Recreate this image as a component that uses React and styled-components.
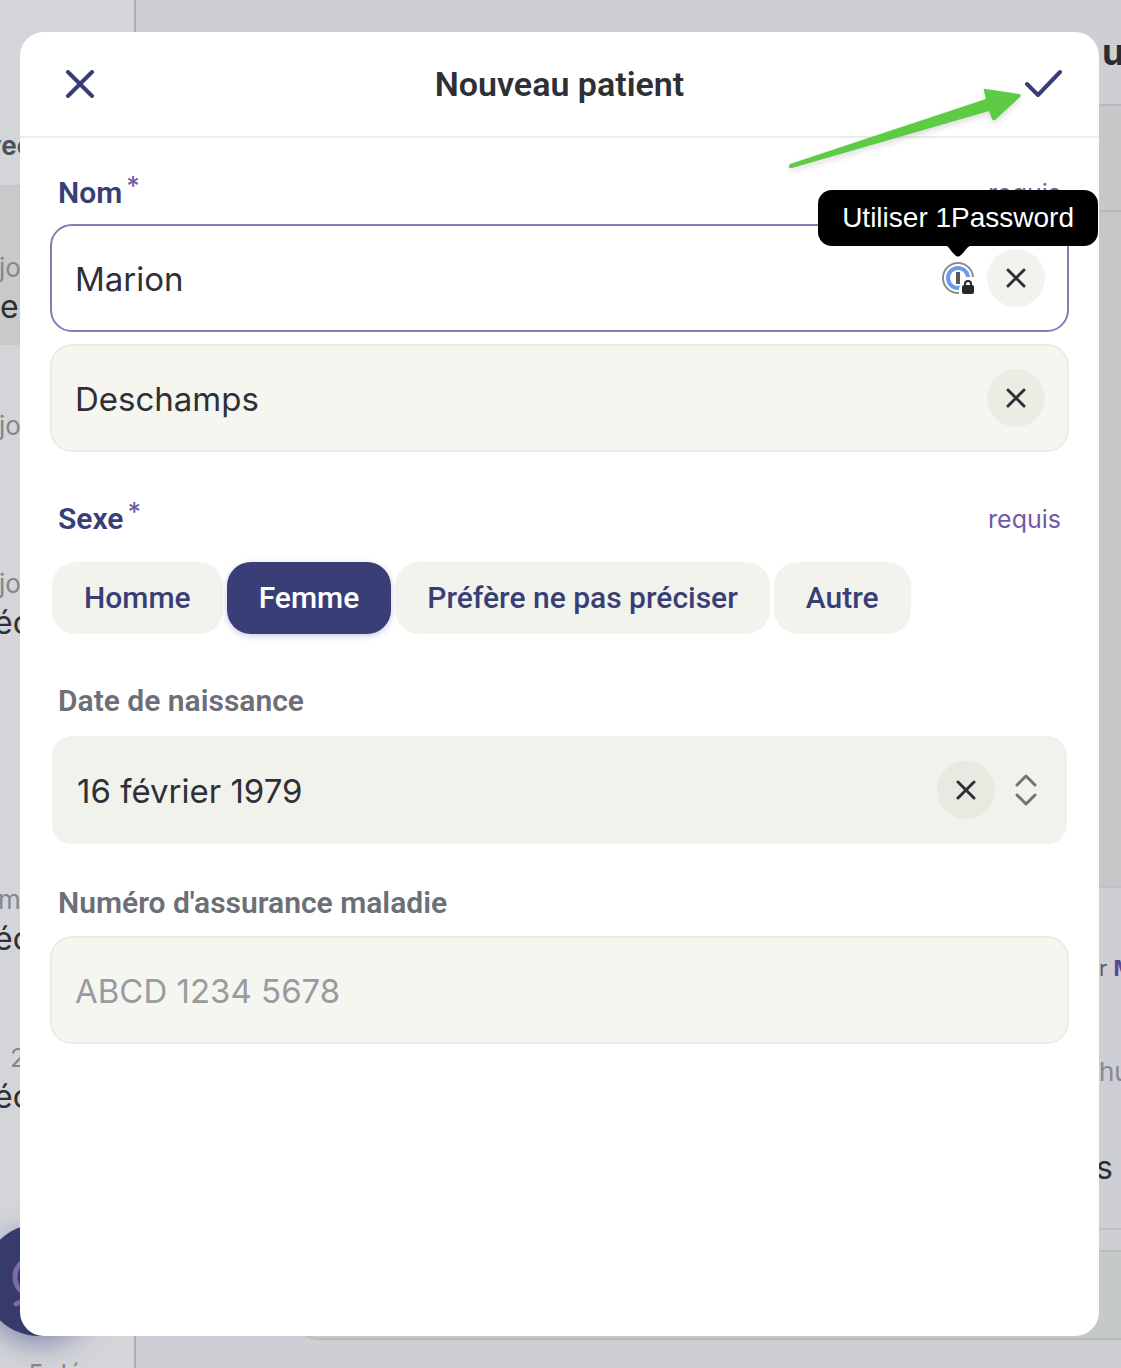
import React, { useState } from "react";
import styled, { createGlobalStyle, css } from "styled-components";

const colors = {
  navy: "#393f76",
  purple: "#7359a6",
  ink: "#2e3036",
  slate: "#6b6f78",
  field: "#f5f6f0",
  fieldDark: "#f1f2ec",
};

const GlobalStyle = createGlobalStyle`
  *, *::before, *::after { box-sizing: border-box; }
  body { margin: 0; font-family: Inter, "Noto Sans", sans-serif; color: ${colors.ink}; background: #cecfd5; }
  button, input { font: inherit; color: inherit; }
  button { border: 0; padding: 0; background: none; cursor: pointer; }
`;

const Page = styled.div`
  position: relative;
  display: flex;
  height: 100vh;
  overflow: hidden;
`;

/* Dimmed patient list */
const Sidebar = styled.aside`
  flex: 0 0 136px;
  border-right: 2px solid #aeafb4;
  background: #d4d5d9;
  overflow: hidden;
`;

const SidebarHeader = styled.div`
  display: flex;
  justify-content: flex-end;
  width: 32px;
  height: 185px;
  padding-top: 128px;
  font-size: 26px;
  font-weight: 700;
  line-height: 36px;
  color: #4e525b;
`;

const List = styled.ul`
  list-style: none;
  margin: 0 0 0 -6px;
  padding: 0;
  border-top: 2px solid #c6c7ca;
`;

const Item = styled.li`
  height: 158px;
  padding-top: 64px;
  background: ${(p) => (p.$selected ? "#c8cac8" : "transparent")};
`;

const ItemDate = styled.div`
  height: 34px;
  padding-left: ${(p) => p.$indent}px;
  font-size: 26px;
  line-height: 34px;
  color: #85878e;
  white-space: nowrap;
`;

const ItemName = styled.div`
  padding-left: ${(p) => p.$indent}px;
  font-size: 32px;
  line-height: 44px;
`;

const Fab = styled.button`
  position: absolute;
  left: -17px;
  bottom: 32px;
  width: 112px;
  height: 112px;
  border-radius: 50%;
  background: #363b6c;
  box-shadow: 0 8px 28px rgba(70, 74, 140, 0.55);
  display: grid;
  place-items: center;
`;

/* Dimmed conversation */
const Main = styled.main`
  flex: 1;
  display: flex;
  flex-direction: column;
  background: #cecfd5;
`;

const Edge = styled.span`
  display: block;
  width: ${(p) => p.$width}px;
  margin-left: auto;
  white-space: nowrap;
`;

const MainHeader = styled.div`
  height: 106px;
  padding-top: 30px;
  border-bottom: 2px solid #b9babd;
  font-size: 36px;
  font-weight: 700;
  line-height: 44px;
  color: #2b2d36;
`;

const Toolbar = styled.div`
  height: 106px;
  background: #c7c9c8;
  border-bottom: 2px solid #b7b9b9;
`;

const Canvas = styled.div`
  flex: 1;
  background: #c5c7c6;
  border-bottom: 2px solid #c0c1c4;
`;

const Thread = styled.div`
  height: 342px;
  padding-top: 64px;
  border-bottom: 2px solid #c0c1c6;
`;

const Author = styled.div`
  font-size: 22px;
  line-height: 32px;
  color: #5d606b;
  strong { color: #5a4694; }
`;

const When = styled.div`
  margin-top: 70px;
  font-size: 26px;
  line-height: 36px;
  color: #858791;
`;

const Message = styled.div`
  margin-top: 56px;
  font-size: 32px;
  line-height: 44px;
`;

const Composer = styled.div`
  height: 90px;
  margin: 20px 0 28px 158px;
  border: solid #b9bcbc;
  border-width: 2px 0 2px 2px;
  border-radius: 24px 0 0 24px;
  background: #c5c9c8;
`;

/* Dialog */
const Overlay = styled.div`
  position: absolute;
  inset: 0;
  display: flex;
  padding: 32px 22px 32px 20px;
`;

const Dialog = styled.section`
  position: relative;
  flex: 1;
  background: #fff;
  border-radius: 24px;
`;

const DialogHeader = styled.header`
  display: grid;
  grid-template-columns: 60px 1fr 60px;
  align-items: center;
  height: 106px;
  padding: 0 26px 0 30px;
  border-bottom: 2px solid #ececea;
`;

const IconButton = styled.button`
  display: grid;
  place-items: center;
  height: 60px;
  color: ${colors.navy};
`;

const Title = styled.h1`
  margin: 0;
  padding-right: 4px;
  font: 600 34px/44px Roboto, "Open Sans", sans-serif;
  text-align: center;
`;

const Form = styled.form`
  display: flex;
  flex-direction: column;
  gap: 40px;
  padding: 36px 30px;
`;

const Group = styled.fieldset`
  min-width: 0;
  margin: 0;
  padding: ${(p) => (p.$roomy ? "8px 0" : 0)};
  border: 0;
`;

const LabelRow = styled.div`
  display: flex;
  justify-content: space-between;
  align-items: center;
  height: 34px;
  margin-bottom: 16px;
  padding: 0 8px;
`;

const labelText = css`
  font: 600 30px/34px Roboto, "Open Sans", sans-serif;
  color: ${(p) => (p.$required ? colors.navy : colors.slate)};
`;
const LabelText = styled.label`${labelText}`;
const GroupName = styled.span`${labelText}`;

const Star = styled.span`
  margin-left: 4px;
  font: 500 26px/26px Inter, sans-serif;
  vertical-align: 8px;
  color: ${colors.purple};
`;

const Required = styled.span`
  padding-top: 4px;
  font-size: 25px;
  line-height: 34px;
  color: ${colors.purple};
`;

const Stack = styled.div`
  display: grid;
  gap: 12px;
`;

const Field = styled.div`
  display: flex;
  align-items: center;
  gap: 12px;
  height: 108px;
  padding: 0 22px 0 23px;
  border: 2px solid ${(p) => (p.$active ? "#8b78b5" : "#ebece4")};
  border-radius: 22px;
  background: ${(p) => (p.$active ? "#fff" : colors.field)};
`;

const DateField = styled.div`
  display: flex;
  align-items: center;
  gap: 18px;
  height: 112px;
  padding: 0 28px 0 25px;
  border: 2px solid transparent;
  border-radius: 22px;
  background: ${colors.fieldDark};
  background-clip: padding-box;
`;

const TextInput = styled.input`
  flex: 1;
  min-width: 0;
  height: 60px;
  padding: 2px 0 0;
  border: 0;
  outline: 0;
  background: none;
  font-size: 33px;
  &::placeholder { color: #989ba0; opacity: 1; }
`;

const ClearButton = styled.button`
  display: grid;
  place-items: center;
  width: 58px;
  height: 58px;
  border-radius: 50%;
  background: ${(p) => p.$tone};
`;

const Chevrons = styled.button`
  display: grid;
  place-items: center;
  color: #6f737b;
`;

const Pills = styled.div`
  display: flex;
  flex-wrap: wrap;
  gap: 4px;
  padding: 12px 2px 2px;
`;

const Pill = styled.label`
  display: flex;
  align-items: center;
  height: 72px;
  padding: 0 32px;
  border-radius: 24px;
  background: #f2f3ed;
  font: 500 30px/36px Roboto, "Open Sans", sans-serif;
  color: ${colors.navy};
  cursor: pointer;
  &:has(input:checked) {
    background: ${colors.navy};
    color: #fff;
    box-shadow: 0 2px 6px rgba(80, 80, 170, 0.3);
  }
  input {
    appearance: none;
    width: 0;
    height: 0;
    margin: 0;
  }
`;

const PasswordTool = styled.button`
  position: relative;
  width: 33px;
  height: 33px;
  svg { display: block; overflow: visible; }
`;

const Tooltip = styled.span`
  position: absolute;
  right: -123px;
  bottom: 49px;
  padding: 0 24px;
  border-radius: 14px;
  background: #000;
  color: #fff;
  font: 28px/56px "Liberation Sans", Arial, sans-serif;
  white-space: nowrap;
`;

const TooltipTip = styled.svg`
  position: absolute;
  left: 0;
  bottom: 37px;
`;

const Pointer = styled.svg`
  position: absolute;
  top: 53px;
  right: 75px;
  pointer-events: none;
  filter: drop-shadow(0 3px 3px rgba(0, 0, 0, 0.14));
`;

const Cross = ({ size, stroke }) => (
  <svg width={size} height={size} viewBox={`0 0 ${size} ${size}`} fill="none" stroke="currentColor" strokeWidth={stroke} strokeLinecap="round">
    <path d={`M2 2L${size - 2} ${size - 2}M${size - 2} 2L2 ${size - 2}`} />
  </svg>
);

const NameField = ({ id, name, value, onChange, active, children }) => (
  <Field $active={active}>
    <TextInput id={id} aria-label={name} value={value} onChange={(e) => onChange(e.target.value)} />
    {children}
    <ClearButton type="button" aria-label="Effacer" $tone={active ? "#f2f3ee" : "#ecece4"} onClick={() => onChange("")}>
      <Cross size={20} stroke={3} />
    </ClearButton>
  </Field>
);

const items = [
  { date: "jo", dateIndent: 5, name: "e", nameIndent: 6, selected: true },
  { date: "jo", dateIndent: 5 },
  { date: "jo", dateIndent: 5, name: "éc", nameIndent: 0 },
  {},
  { date: "m", dateIndent: 4, name: "éc", nameIndent: 0 },
  { date: "2", dateIndent: 16, name: "éc", nameIndent: 0 },
  {},
  { date: "5 déc", dateIndent: 34 },
];

const sexes = ["Homme", "Femme", "Préfère ne pas préciser", "Autre"];

export default function App() {
  const [first, setFirst] = useState("Marion");
  const [last, setLast] = useState("Deschamps");
  const [sex, setSex] = useState("Femme");
  const [birth, setBirth] = useState("16 février 1979");

  return (
    <Page>
      <GlobalStyle />
      <Sidebar>
        <SidebarHeader>vec</SidebarHeader>
        <List>
          {items.map((item, i) => (
            <Item key={i} $selected={item.selected}>
              <ItemDate $indent={item.dateIndent || 0}>{item.date}</ItemDate>
              {item.name && <ItemName $indent={item.nameIndent}>{item.name}</ItemName>}
            </Item>
          ))}
        </List>
      </Sidebar>
      <Main>
        <MainHeader><Edge $width={19}>u</Edge></MainHeader>
        <Toolbar />
        <Canvas />
        <Thread>
          <Author><Edge $width={22}>r <strong>M</strong></Edge></Author>
          <When><Edge $width={22}>hu</Edge></When>
          <Message><Edge $width={25}>s</Edge></Message>
        </Thread>
        <Composer />
      </Main>
      <Fab type="button" aria-label="Ajouter">
        <svg width="56" height="64" viewBox="0 0 56 64" fill="none" stroke="#7d68ab" strokeWidth="5" strokeLinecap="round">
          <ellipse cx="18" cy="29" rx="14" ry="17" />
          <path d="M5 56C11 54 16 50 20 44" />
        </svg>
      </Fab>

      <Overlay>
        <Dialog role="dialog" aria-labelledby="dialog-title">
          <DialogHeader>
            <IconButton type="button" aria-label="Fermer"><Cross size={28} stroke={4} /></IconButton>
            <Title id="dialog-title">Nouveau patient</Title>
            <IconButton type="submit" form="patient" aria-label="Enregistrer">
              <svg width="38" height="30" viewBox="0 0 38 30" fill="none" stroke="currentColor" strokeWidth="4" strokeLinecap="round" strokeLinejoin="round">
                <path d="M3 15L14 26L36 3" />
              </svg>
            </IconButton>
          </DialogHeader>

          <Form id="patient" onSubmit={(e) => e.preventDefault()}>
            <Group>
              <LabelRow>
                <LabelText htmlFor="first" $required>Nom<Star>*</Star></LabelText>
                <Required>requis</Required>
              </LabelRow>
              <Stack>
                <NameField id="first" name="Prénom" value={first} onChange={setFirst} active>
                  <PasswordTool type="button">
                    <svg width="33" height="33" viewBox="0 0 33 33" fill="none">
                      <circle cx="16" cy="16" r="15" stroke="#8b8c85" strokeWidth="2" />
                      <circle cx="16" cy="16" r="10" stroke="#6a9bee" strokeWidth="4" />
                      <path d="M17 33V27C17 25 18 24 20 22V19Q21 16 25 15H34V34H17Z" fill="#fff" />
                      <rect x="14" y="10" width="4" height="12" fill="#55585c" />
                      <path d="M23 25V22C23 18 29 18 29 22V25" stroke="#26282c" strokeWidth="2" />
                      <rect x="20" y="23" width="12" height="9" rx="2" fill="#26282c" />
                    </svg>
                    <TooltipTip width="33" height="13" viewBox="0 0 33 13">
                      <path d="M1 0H32C27 0 25 3 22 7L19 10Q16 13 13 10L10 7C7 3 6 0 1 0Z" fill="#000" />
                    </TooltipTip>
                    <Tooltip role="tooltip">Utiliser 1Password</Tooltip>
                  </PasswordTool>
                </NameField>
                <NameField id="last" name="Nom de famille" value={last} onChange={setLast} />
              </Stack>
            </Group>

            <Group $roomy role="radiogroup" aria-labelledby="sex-name">
              <LabelRow>
                <GroupName id="sex-name" $required>Sexe<Star>*</Star></GroupName>
                <Required>requis</Required>
              </LabelRow>
              <Pills>
                {sexes.map((s) => (
                  <Pill key={s}>
                    <input type="radio" name="sex" checked={sex === s} onChange={() => setSex(s)} />
                    {s}
                  </Pill>
                ))}
              </Pills>
            </Group>

            <Group>
              <LabelRow><LabelText htmlFor="birth">Date de naissance</LabelText></LabelRow>
              <DateField>
                <TextInput id="birth" value={birth} onChange={(e) => setBirth(e.target.value)} />
                <ClearButton type="button" aria-label="Effacer" $tone="#e8e9e0" onClick={() => setBirth("")}>
                  <Cross size={20} stroke={3} />
                </ClearButton>
                <Chevrons type="button" aria-label="Choisir une date">
                  <svg width="26" height="32" viewBox="0 0 26 32" fill="none" stroke="currentColor" strokeWidth="3" strokeLinecap="round" strokeLinejoin="round">
                    <path d="M4 11L13 2L22 11M4 21L13 30L22 21" />
                  </svg>
                </Chevrons>
              </DateField>
            </Group>

            <Group>
              <LabelRow><LabelText htmlFor="insurance">Numéro d'assurance maladie</LabelText></LabelRow>
              <Field>
                <TextInput id="insurance" placeholder="ABCD 1234 5678" />
              </Field>
            </Group>
          </Form>

          <Pointer width="240" height="90" viewBox="0 0 240 90" aria-hidden="true">
            <path d="M6 79L202 14L200 6Q199 3 202 4L235 9Q238 10 236 12L211 35Q209 36 208 34L205 26L8 83Q3 83 6 79Z" fill="#5dcb44" />
          </Pointer>
        </Dialog>
      </Overlay>
    </Page>
  );
}
